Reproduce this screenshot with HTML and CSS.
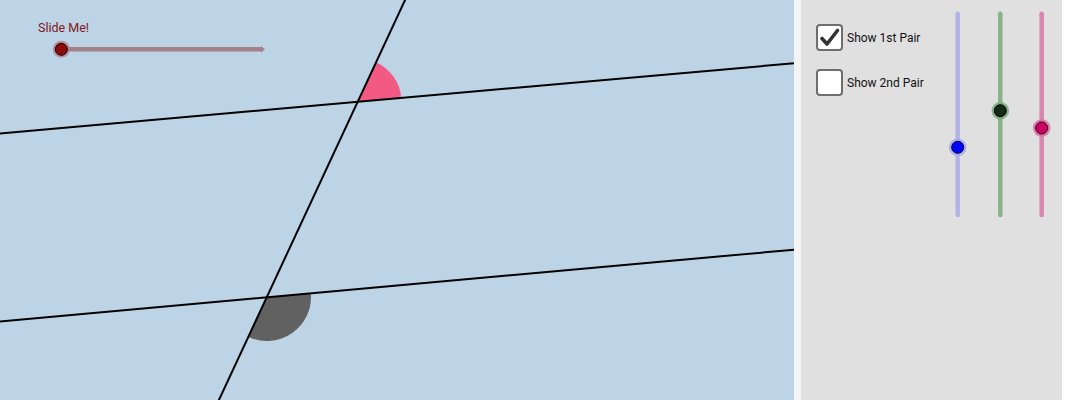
FILE: index.html
```html
<!DOCTYPE html>
<html>
<head>
<meta charset="utf-8">
<link rel="stylesheet" href="styles.css">
</head>
<body>
<div class="app">
  <div class="canvas">
    <svg class="graph" width="794" height="400" viewBox="0 0 794 400">
      <path d="M358 101.6 L376 62.2 A43.5 43.5 0 0 1 401.3 97.8 Z" fill="#f25a84"/>
      <path d="M267 297 L310.8 293.1 A44 44 0 0 1 248.4 336.9 Z" fill="#616161"/>
      <line x1="-2" y1="133.6" x2="796" y2="63.1" stroke="#000" stroke-width="2"/>
      <line x1="-2" y1="321.6" x2="796" y2="249.5" stroke="#000" stroke-width="2"/>
      <line x1="406" y1="-2" x2="218" y2="402" stroke="#000" stroke-width="2"/>
      <text x="38" y="32" class="slide-label">Slide Me!</text>
      <line x1="61" y1="49.3" x2="262" y2="49.3" stroke="#a3818a" stroke-width="4.5"/>
      <polygon points="261,46 265,49.3 261,52.6" fill="#a3818a"/>
      <circle cx="61.3" cy="49.3" r="8.5" fill="#b07a85" opacity="0.75"/>
      <circle cx="61.3" cy="49.3" r="6" fill="#8b0a0a" stroke="#1a0000" stroke-width="1"/>
    </svg>
  </div>
  <div class="gap"></div>
  <div class="panel">
    <div class="checks">
      <label class="check">
        <span class="box">
          <svg width="23" height="23" viewBox="0 0 23 23"><path d="M4 12.5 L9 18 L19.5 4.5" fill="none" stroke="#333" stroke-width="3.6" stroke-linecap="round" stroke-linejoin="round"/></svg>
        </span>
        <span class="text">Show 1st Pair</span>
      </label>
      <label class="check">
        <span class="box"></span>
        <span class="text">Show 2nd Pair</span>
      </label>
    </div>
    <svg class="sliders" width="110" height="230" viewBox="0 0 110 230">
      <line x1="12.7" y1="14" x2="12.7" y2="215" stroke="#b3b3e6" stroke-width="4.5" stroke-linecap="round"/>
      <polygon points="9.7,15 12.7,11 15.7,15" fill="#b3b3e6"/>
      <circle cx="12.7" cy="147.3" r="8.8" fill="#a3a3ee" opacity="0.8"/>
      <circle cx="12.7" cy="147.3" r="6" fill="#0000ff" stroke="#000033" stroke-width="1"/>

      <line x1="55.3" y1="14" x2="55.3" y2="215" stroke="#88b388" stroke-width="4.5" stroke-linecap="round"/>
      <polygon points="52.3,15 55.3,11 58.3,15" fill="#88b388"/>
      <circle cx="55.3" cy="110.7" r="8.8" fill="#76a676" opacity="0.8"/>
      <circle cx="55.3" cy="110.7" r="6" fill="#142a14" stroke="#000" stroke-width="1"/>

      <line x1="96.7" y1="14" x2="96.7" y2="215" stroke="#d986b0" stroke-width="4.5" stroke-linecap="round"/>
      <polygon points="93.7,15 96.7,11 99.7,15" fill="#d986b0"/>
      <circle cx="96.7" cy="128" r="8.8" fill="#d46a9c" opacity="0.8"/>
      <circle cx="96.7" cy="128" r="6" fill="#cc0066" stroke="#330011" stroke-width="1"/>
    </svg>
  </div>
</div>
</body>
</html>
```

FILE: styles.css
```css
html, body {
  margin: 0;
  padding: 0;
  background: #ffffff;
}
body {
  font-family: Roboto, "Liberation Sans", sans-serif;
}
.app {
  display: flex;
  width: 1062px;
  height: 400px;
}
.canvas {
  width: 794px;
  height: 400px;
  background: #bdd3e6;
  overflow: hidden;
  flex: none;
}
.graph {
  display: block;
}
.slide-label {
  font-family: Roboto, "Liberation Sans", sans-serif;
  font-size: 12.5px;
  fill: #7f1a1a;
}
.gap {
  width: 7px;
  height: 400px;
  background: #f4f4f4;
  flex: none;
}
.panel {
  flex: none;
  width: 261px;
  height: 400px;
  background: #e0e0e0;
  display: flex;
  align-items: flex-start;
}
.checks {
  display: flex;
  flex-direction: column;
  gap: 18px;
  padding: 24px 0 0 15px;
}
.check {
  display: flex;
  align-items: center;
  gap: 4px;
}
.box {
  box-sizing: border-box;
  width: 27px;
  height: 27px;
  border: 2px solid #6e6e6e;
  border-radius: 4px;
  background: #ffffff;
  display: flex;
  align-items: center;
  justify-content: center;
}
.box svg {
  display: block;
}
.text {
  font-size: 12px;
  color: #111;
}
.sliders {
  display: block;
  margin-left: auto;
  margin-right: 7px;
}
```
